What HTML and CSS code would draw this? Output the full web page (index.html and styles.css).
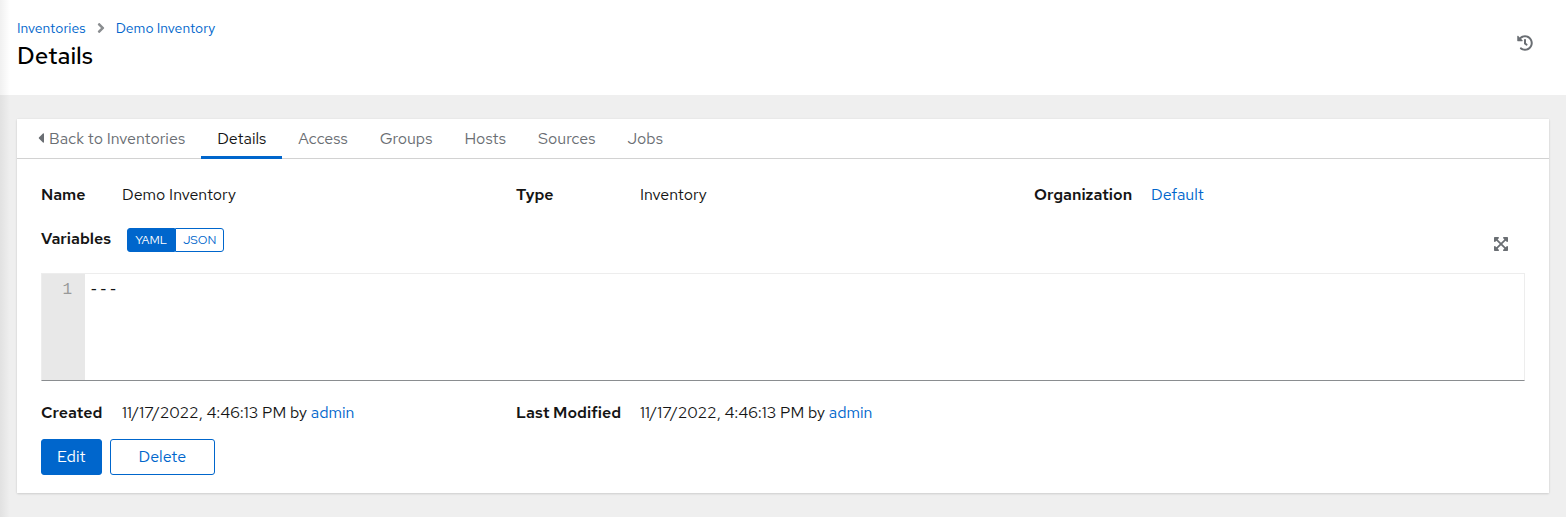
FILE: index.html
```html
<!DOCTYPE html>
<html lang="en">

<head>
    <meta charset="utf-8">
    <meta name="viewport" content="width=device-width, initial-scale=1.0">
    <title>Demo Inventory</title>
    <link rel="stylesheet" href="styles.css">
</head>

<body>
    <header class="page-header">
        <div>
            <nav class="breadcrumb" aria-label="Breadcrumb">
                <a href="#">Inventories</a>
                <svg class="breadcrumb-divider" viewBox="0 0 256 512" aria-hidden="true"><path d="M224.3 273l-136 136c-9.4 9.4-24.6 9.4-33.9 0l-22.6-22.6c-9.4-9.4-9.4-24.6 0-33.9l96.4-96.4-96.4-96.4c-9.4-9.4-9.4-24.6 0-33.9L54.3 103c9.4-9.4 24.6-9.4 33.9 0l136 136c9.5 9.4 9.5 24.6.1 34z"/></svg>
                <a href="#">Demo Inventory</a>
            </nav>
            <h1>Details</h1>
        </div>
        <button class="icon-button" type="button" aria-label="Activity stream">
            <svg width="16" height="16" viewBox="0 0 512 512"><path d="M504 255.531c.253 136.64-111.18 248.372-247.82 248.468-59.015.042-113.223-20.53-155.822-54.911-11.077-8.94-11.905-25.541-1.839-35.607l11.267-11.267c8.609-8.609 22.353-9.551 31.891-1.984C173.062 425.135 212.781 440 256 440c101.705 0 184-82.311 184-184 0-101.705-82.311-184-184-184-48.814 0-93.149 18.969-126.068 49.932l50.754 50.754c10.08 10.08 2.941 27.314-11.313 27.314H24c-8.837 0-16-7.163-16-16V38.627c0-14.254 17.234-21.393 27.314-11.314l49.372 49.372C129.209 34.136 189.552 8 256 8c136.81 0 247.747 110.78 248 247.531zm-180.912 78.784l9.823-12.63c8.138-10.463 6.253-25.542-4.21-33.679L288 256.349V152c0-13.255-10.745-24-24-24h-16c-13.255 0-24 10.745-24 24v135.651l65.409 50.874c10.463 8.137 25.541 6.253 33.679-4.21z"/></svg>
        </button>
    </header>

    <main class="card">
        <nav class="tabs">
            <a class="tab" href="#"><svg class="caret" viewBox="0 0 192 512" aria-hidden="true"><path d="M192 127.338v257.324c0 17.818-21.543 26.741-34.142 14.142L29.196 270.142c-7.81-7.81-7.81-20.474 0-28.284l128.662-128.662c12.599-12.6 34.142-3.676 34.142 14.142z"/></svg>Back to Inventories</a>
            <a class="tab active" href="#">Details</a>
            <a class="tab" href="#">Access</a>
            <a class="tab" href="#">Groups</a>
            <a class="tab" href="#">Hosts</a>
            <a class="tab" href="#">Sources</a>
            <a class="tab" href="#">Jobs</a>
        </nav>

        <div class="card-body">
            <dl class="details">
                <dt>Name</dt>
                <dd>Demo Inventory</dd>
                <dt>Type</dt>
                <dd>Inventory</dd>
                <dt>Organization</dt>
                <dd><a href="#">Default</a></dd>
            </dl>

            <section class="variables">
                <div class="variables-header">
                    <label for="variables">Variables</label>
                    <div class="toggle">
                        <button class="selected" type="button">YAML</button>
                        <button type="button">JSON</button>
                    </div>
                    <button class="icon-button expand" type="button" aria-label="Expand input">
                        <svg width="16" height="16" viewBox="0 0 448 512"><path d="M448 344v112a23.94 23.94 0 0 1-24 24H312c-21.39 0-32.09-25.9-17-41l36.2-36.2L224 295.6 116.77 402.9 153 439c15.09 15.1 4.39 41-17 41H24a23.94 23.94 0 0 1-24-24V344c0-21.4 25.89-32.1 41-17l36.19 36.2L184.46 256 77.18 148.7 41 185c-15.1 15.1-41 4.4-41-17V56a23.94 23.94 0 0 1 24-24h112c21.39 0 32.09 25.9 17 41l-36.2 36.2L224 216.4l107.23-107.3L295 73c-15.09-15.1-4.39-41 17-41h112a23.94 23.94 0 0 1 24 24v112c0 21.4-25.89 32.1-41 17l-36.19-36.2L263.54 256l107.28 107.3L407 327.1c15.1-15.2 41-4.5 41 16.9z"/></svg>
                    </button>
                </div>
                <div class="editor">
                    <div class="gutter">1</div>
                    <textarea id="variables" rows="4" spellcheck="false" readonly>---</textarea>
                </div>
            </section>

            <dl class="details">
                <dt>Created</dt>
                <dd>11/17/2022, 4:46:13 PM by <a href="#">admin</a></dd>
                <dt>Last Modified</dt>
                <dd>11/17/2022, 4:46:13 PM by <a href="#">admin</a></dd>
            </dl>

            <div class="actions">
                <button class="btn btn-primary" type="button">Edit</button>
                <button class="btn btn-secondary" type="button">Delete</button>
            </div>
        </div>
    </main>
</body>

</html>
```
FILE: styles.css
```css
:root {
    --blue: #0066cc;
    --text: #151515;
    --muted: #6a6e73;
    --page-bg: #efefef;
}

* {
    box-sizing: border-box;
}

body {
    position: relative;
    min-height: 100vh;
    margin: 0;
    background: var(--page-bg);
    color: var(--text);
    font-family: "Red Hat Text", Lato, sans-serif;
    font-size: 16px;
    line-height: 24px;
}

/* shadow cast by the sidebar */
body::before {
    content: "";
    position: absolute;
    top: 0;
    bottom: 0;
    left: 0;
    width: 10px;
    background: linear-gradient(to right, rgba(3, 3, 3, 0.06), rgba(3, 3, 3, 0));
}

a {
    color: var(--blue);
    text-decoration: none;
}

button {
    font: inherit;
    cursor: pointer;
}

svg {
    fill: currentColor;
}

.page-header {
    display: flex;
    justify-content: space-between;
    align-items: flex-start;
    padding: 17px 17px 22px;
    background: #fff;
}

.breadcrumb {
    display: flex;
    align-items: center;
    font-size: 14px;
    line-height: 22px;
}

.breadcrumb-divider {
    width: 8px;
    height: 16px;
    margin: 0 11px;
    color: #8a8d90;
}

h1 {
    margin: 0;
    color: #000;
    font-size: 24px;
    font-weight: 500;
    line-height: 34px;
}

.icon-button {
    display: flex;
    padding: 10px 16px;
    border: none;
    background: none;
    color: var(--muted);
}

.page-header .icon-button {
    margin-top: 8px;
}

.card {
    margin: 24px 17px;
    background: #fff;
    box-shadow: 0 1px 2px rgba(3, 3, 3, 0.12), 0 0 2px rgba(3, 3, 3, 0.06);
}

.tabs {
    display: flex;
    padding-left: 5px;
    border-bottom: 1px solid #d2d2d2;
}

.tab {
    margin-bottom: -1px;
    padding: 8px 16px 5px;
    border-bottom: 3px solid transparent;
    color: var(--muted);
    white-space: nowrap;
}

.tab.active {
    border-bottom-color: var(--blue);
    color: var(--text);
}

.caret {
    width: 6px;
    height: 16px;
    margin-right: 5px;
    vertical-align: -2px;
}

.card-body {
    display: flex;
    flex-direction: column;
    gap: 20px;
    padding: 24px 24px 18px;
}

.details {
    display: grid;
    grid-template-columns: 61px 1fr 104px 1fr 97px 1fr;
    column-gap: 20px;
    margin: 0;
}

.details dt {
    font-weight: 600;
    white-space: nowrap;
}

.details dd {
    margin: 0;
}

.variables-header {
    display: flex;
    align-items: flex-start;
    gap: 16px;
    height: 46px;
}

.variables-header label {
    font-weight: 600;
}

.toggle {
    display: flex;
    margin-top: 1px;
}

.toggle button {
    height: 24px;
    padding: 0 7px;
    border: 1px solid var(--blue);
    border-radius: 0 3px 3px 0;
    background: #fff;
    color: var(--blue);
    font-size: 12px;
    line-height: 22px;
}

.toggle .selected {
    border-radius: 3px 0 0 3px;
    background: var(--blue);
    color: #fff;
}

.expand {
    margin-left: auto;
    margin-top: -1px;
}

.editor {
    display: flex;
    border: 1px solid #ededed;
    border-bottom-color: #8a8d90;
}

.gutter {
    width: 43px;
    padding: 4px 13px;
    background: #e8e8e8;
    color: #999;
    font-family: "Liberation Mono", monospace;
    text-align: right;
}

.editor textarea {
    flex: 1;
    padding: 4px 4px 6px;
    border: none;
    outline: none;
    resize: none;
    background: #fff;
    color: var(--text);
    font-family: "Liberation Mono", monospace;
    font-size: 16px;
    line-height: 24px;
}

.actions {
    display: flex;
    gap: 8px;
    margin-top: -6px;
}

.btn {
    padding: 5px 15px;
    border: 1px solid var(--blue);
    border-radius: 3px;
}

.btn-primary {
    background: var(--blue);
    color: #fff;
}

.btn-secondary {
    padding: 5px 28px;
    background: #fff;
    color: var(--blue);
}
```
